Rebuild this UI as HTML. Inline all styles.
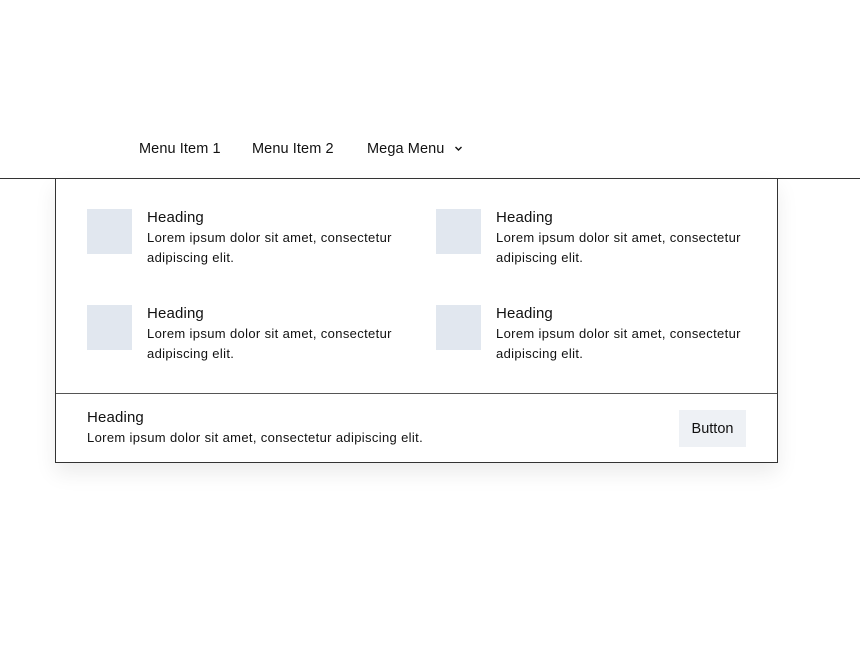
<!DOCTYPE html>
<html><head><style>
body{margin:0;width:860px;height:660px;background:#fff;font-family:"Liberation Sans",Arial,sans-serif;color:#111;position:relative;overflow:hidden}
.a{position:absolute;white-space:nowrap}
.nav{font-size:14.5px;top:141px;line-height:17px;letter-spacing:.1px}
.line{position:absolute;left:0;top:178px;width:860px;height:1px;background:#333;z-index:5}
.panel{position:absolute;left:55px;top:178px;width:721px;height:284px;border:1px solid #333;border-top:none;background:#fff;box-shadow:0 10px 20px rgba(0,0,0,.08)}
.img{position:absolute;width:45px;height:45px;background:#e1e7ef}
.h{font-size:15px;line-height:18px;letter-spacing:.15px}
.p{font-size:13px;line-height:20px;letter-spacing:.35px}
.div{position:absolute;left:0;top:215px;width:721px;height:1px;background:#555}
.btn{position:absolute;left:623px;top:232px;width:67px;height:37px;background:#eef1f5;font-size:14.5px;line-height:39px;text-align:center}
</style></head><body>
<div class="a nav" style="left:139px">Menu Item 1</div>
<div class="a nav" style="left:252px">Menu Item 2</div>
<div class="a nav" style="left:367px">Mega Menu</div>
<svg class="a" style="left:454px;top:145px" width="9" height="7" viewBox="0 0 9 7"><path d="M1.5 2 L4.5 5 L7.5 2" fill="none" stroke="#111" stroke-width="1.4"/></svg>
<div class="line"></div>
<div class="panel">
  <div class="img" style="left:31px;top:31px"></div>
  <div class="a h" style="left:91px;top:31px">Heading</div>
  <div class="a p" style="left:91px;top:50px">Lorem ipsum dolor sit amet, consectetur<br>adipiscing elit.</div>
  <div class="img" style="left:380px;top:31px"></div>
  <div class="a h" style="left:440px;top:31px">Heading</div>
  <div class="a p" style="left:440px;top:50px">Lorem ipsum dolor sit amet, consectetur<br>adipiscing elit.</div>
  <div class="img" style="left:31px;top:127px"></div>
  <div class="a h" style="left:91px;top:127px">Heading</div>
  <div class="a p" style="left:91px;top:146px">Lorem ipsum dolor sit amet, consectetur<br>adipiscing elit.</div>
  <div class="img" style="left:380px;top:127px"></div>
  <div class="a h" style="left:440px;top:127px">Heading</div>
  <div class="a p" style="left:440px;top:146px">Lorem ipsum dolor sit amet, consectetur<br>adipiscing elit.</div>
  <div class="div"></div>
  <div class="a h" style="left:31px;top:231px">Heading</div>
  <div class="a p" style="left:31px;top:250px">Lorem ipsum dolor sit amet, consectetur adipiscing elit.</div>
  <div class="btn">Button</div>
</div>
</body></html>
